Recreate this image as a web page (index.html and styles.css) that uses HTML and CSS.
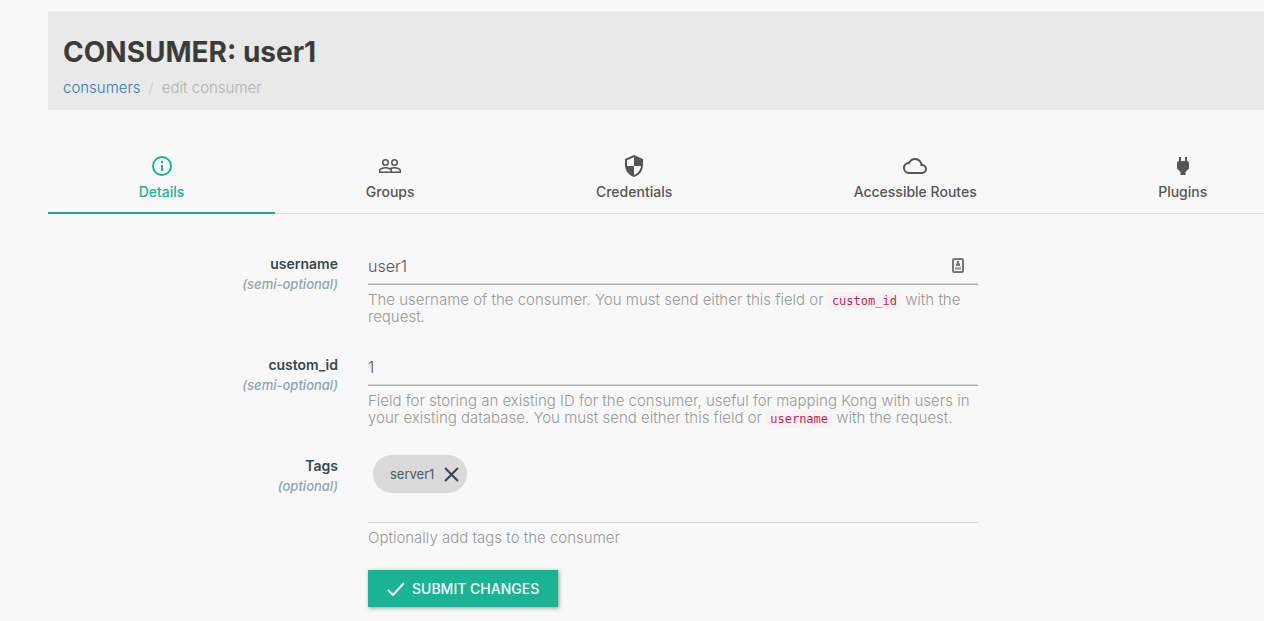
FILE: index.html
```html
<!DOCTYPE html>
<html lang="en">
<head>
<meta charset="utf-8">
<title>Consumer: user1</title>
<link rel="stylesheet" href="styles.css">
</head>
<body>
<main class="page">
  <header class="page-header">
    <h1 class="title">CONSUMER: user1</h1>
    <nav class="breadcrumb" aria-label="Breadcrumb">
      <a class="crumb-link" href="#">consumers</a>
      <span class="crumb-separator">/</span>
      <span>edit consumer</span>
    </nav>
  </header>

  <nav class="tabs" aria-label="Consumer sections">
    <a class="tab tab-active" href="#">
      <svg class="icon" viewBox="0 0 24 24"><path d="M11 9h2V7h-2m1 13c-4.41 0-8-3.59-8-8s3.59-8 8-8 8 3.59 8 8-3.59 8-8 8m0-18A10 10 0 0 0 2 12a10 10 0 0 0 10 10 10 10 0 0 0 10-10A10 10 0 0 0 12 2m-1 15h2v-6h-2v6z"/></svg>
      Details
    </a>
    <a class="tab" href="#">
      <svg class="icon" viewBox="0 0 24 24"><path d="M16.5 13c-1.2 0-3.07.34-4.5 1-1.43-.67-3.3-1-4.5-1C5.33 13 1 14.08 1 16.25V19h22v-2.75c0-2.17-4.33-3.25-6.5-3.25m-4 4.5h-10v-1.25c0-.54 2.56-1.75 5-1.75s5 1.21 5 1.75v1.25m9 0H14v-1.25c0-.46-.2-.86-.52-1.22.88-.3 1.96-.53 3.02-.53 2.44 0 5 1.21 5 1.75v1.25M7.500 12A3.500 3.500 0 0 0 11 8.500 3.500 3.500 0 0 0 7.500 5 3.500 3.500 0 0 0 4 8.500 3.500 3.500 0 0 0 7.500 12m0-5.500a2 2 0 0 1 2 2 2 2 0 0 1-2 2 2 2 0 0 1-2-2 2 2 0 0 1 2-2m9 5.500A3.500 3.500 0 0 0 20 8.500 3.500 3.500 0 0 0 16.500 5 3.500 3.500 0 0 0 13 8.500a3.500 3.500 0 0 0 3.500 3.500m0-5.500a2 2 0 0 1 2 2 2 2 0 0 1-2 2 2 2 0 0 1-2-2 2 2 0 0 1 2-2z"/></svg>
      Groups
    </a>
    <a class="tab" href="#">
      <svg class="icon" viewBox="0 0 24 24"><path d="M12 1 3 5v6c0 5.550 3.840 10.730 9 12 5.160-1.270 9-6.450 9-12V5l-9-4z"/><path class="shield-mask" d="M5 6.300 12 3.190V12H5zM12 12h7c-.53 4.110-3.280 7.780-7 8.920z"/></svg>
      Credentials
    </a>
    <a class="tab" href="#">
      <svg class="icon" viewBox="0 0 24 24"><path d="M19 18H6a4 4 0 0 1-4-4 4 4 0 0 1 4-4h.71C7.370 7.690 9.480 6 12 6a5.500 5.500 0 0 1 5.500 5.500v.5H19a3 3 0 0 1 3 3 3 3 0 0 1-3 3m.35-7.960C18.670 6.590 15.640 4 12 4 9.110 4 6.600 5.640 5.350 8.030 2.340 8.360 0 10.900 0 14a6 6 0 0 0 6 6h13a5 5 0 0 0 5-5c0-2.640-2.050-4.780-4.650-4.960z"/></svg>
      Accessible Routes
    </a>
    <a class="tab" href="#">
      <svg class="icon" viewBox="0 0 24 24"><path d="M16 7V3h-2v4h-4V3H8v4c-1 0-2 1-2 2v5.500L9.500 18v3h5v-3l3.500-3.500V9c0-1-1-2-2-2z"/></svg>
      Plugins
    </a>
  </nav>

  <form class="form">
    <div class="row">
      <label class="label" for="username">username <em class="hint">(semi-optional)</em></label>
      <div class="field">
        <div class="control">
          <input class="input" id="username" type="text" value="user1">
          <svg class="autofill" viewBox="0 0 12 15"><rect class="autofill-frame" x="1" y="1" width="10" height="13" rx="1"/><path d="M5 3h2v2l1 1v2H4V6l1-1z"/><path class="autofill-base" d="M3 9h6v3H3z"/></svg>
        </div>
        <p class="help">The username of the consumer. You must send either this field or <code class="code">custom_id</code> with the request.</p>
      </div>
    </div>
    <div class="row">
      <label class="label" for="custom-id">custom_id <em class="hint">(semi-optional)</em></label>
      <div class="field">
        <div class="control"><input class="input" id="custom-id" type="text" value="1"></div>
        <p class="help">Field for storing an existing ID for the consumer, useful for mapping Kong with users in your existing database. You must send either this field or <code class="code">username</code> with the request.</p>
      </div>
    </div>
    <div class="row row-last">
      <label class="label" for="tags">Tags <em class="hint">(optional)</em></label>
      <div class="field">
        <div class="chips">
          <span class="chip">server1
            <button class="chip-remove" type="button" aria-label="Remove server1"><svg class="chip-icon" viewBox="0 0 14 14"><path d="m1 1 12 12M13 1 1 13"/></svg></button>
          </span>
          <input class="tag-input" id="tags" type="text">
        </div>
        <p class="help">Optionally add tags to the consumer</p>
      </div>
    </div>
    <div class="actions-row">
      <div class="actions">
        <button class="submit" type="submit"><svg class="check" viewBox="0 0 18 14"><path d="m1 8 5 5L17 1"/></svg>SUBMIT CHANGES</button>
      </div>
    </div>
  </form>
</main>
</body>
</html>
```
FILE: styles.css
```css
* { box-sizing: border-box; }

body {
  margin: 0;
  overflow-x: hidden;
  background: #f8f8f8;
  color: #555;
  font-family: Inter, "Open Sans", sans-serif;
  font-size: 14px;
  line-height: 17px;
}

/* The content area extends a little past the right edge of the window. */
.page { margin: 11px -34px 0 48px; }

.page-header {
  padding: 23px 15px 12px;
  background: #e9e9e9;
}

.title {
  margin: 0;
  color: #3b3b3b;
  font-size: 28px;
  font-weight: 700;
  line-height: 36px;
}

.breadcrumb {
  display: flex;
  gap: 8px;
  margin-top: 8px;
  color: #b0b0b0;
  font-size: 15px;
  font-weight: 300;
  line-height: 20px;
}

.crumb-link { color: #337ab7; text-decoration: none; }
.crumb-separator { color: #ccc; }

.tabs {
  display: flex;
  margin-top: 36px;
  border-bottom: 1px solid #d9d9d9;
}

.tab {
  display: flex;
  flex: 1 1 auto;
  flex-direction: column;
  align-items: center;
  gap: 4px;
  margin-bottom: -1px;
  padding: 8px 0 10px;
  border-bottom: 2px solid transparent;
  color: #555;
  font-weight: 500;
  line-height: 20px;
  text-decoration: none;
}

.tab-active { border-color: #26a68f; color: #1ab394; }

.icon { width: 24px; height: 24px; fill: currentColor; }
.shield-mask { fill: #f8f8f8; }

.form { margin: 36px -15px 0; padding-bottom: 12px; }

.row,
.actions-row {
  display: grid;
  grid-template-columns: 1fr 2fr 1fr;
}

.row { margin-bottom: 26px; }
.row-last { margin-bottom: 24px; }

.label {
  padding: 3px 15px 0;
  color: #37474f;
  font-weight: 600;
  line-height: 21px;
  text-align: right;
}

.hint { display: block; color: #90a4ae; font-size: 13px; font-weight: 500; }

.field { padding: 0 15px; }

.control { position: relative; }

.input {
  display: block;
  width: 100%;
  height: 35px;
  padding: 0 0 2px;
  border: 0;
  border-bottom: 1px solid #aaaeac;
  box-shadow: 0 -1px #d5d6d5 inset;
  outline: 0;
  background: transparent;
  color: #555;
  font: 300 16px Inter, "Open Sans", sans-serif;
}

.autofill {
  position: absolute;
  top: 8px;
  right: 14px;
  width: 12px;
  height: 15px;
  fill: #777;
}

.autofill-frame { fill: none; stroke: #777; stroke-width: 2; }
.autofill-base { fill: #aaa; }

.help { margin: 6px 0 0; color: #999; font-size: 15px; font-weight: 300; }

.code {
  padding: 2px 4px;
  border-radius: 4px;
  background: #f9f2f4;
  color: #c7254e;
  font-family: "DejaVu Sans Mono", monospace;
  font-size: 12px;
  font-weight: 400;
  line-height: 1;
}

.chips {
  display: flex;
  align-items: flex-start;
  height: 71px;
  padding: 3px 5px;
  border-bottom: 1px solid #d5d5d5;
}

.chip {
  display: flex;
  align-items: center;
  gap: 10px;
  height: 38px;
  padding: 0 8px 0 17px;
  border-radius: 19px;
  background: #dadada;
  color: #455a64;
  font-size: 13px;
}

.chip-remove {
  display: flex;
  padding: 0;
  border: 0;
  background: transparent;
}

.chip-icon { width: 15px; height: 15px; fill: none; stroke: #37474f; stroke-width: 2; }

.tag-input {
  flex: 1;
  height: 38px;
  border: 0;
  outline: 0;
  background: transparent;
}

.actions { grid-column: 2; padding: 0 15px; }

.submit {
  display: flex;
  align-items: center;
  gap: 7px;
  height: 37px;
  padding: 0 19px;
  border: 0;
  background: #1ab394;
  box-shadow: 1px 1px 4px rgba(0, 0, 0, .4);
  color: #fff;
  font: 500 14px Inter, "Open Sans", sans-serif;
}

.check { width: 18px; height: 14px; fill: none; stroke: currentColor; stroke-width: 2; }
```
